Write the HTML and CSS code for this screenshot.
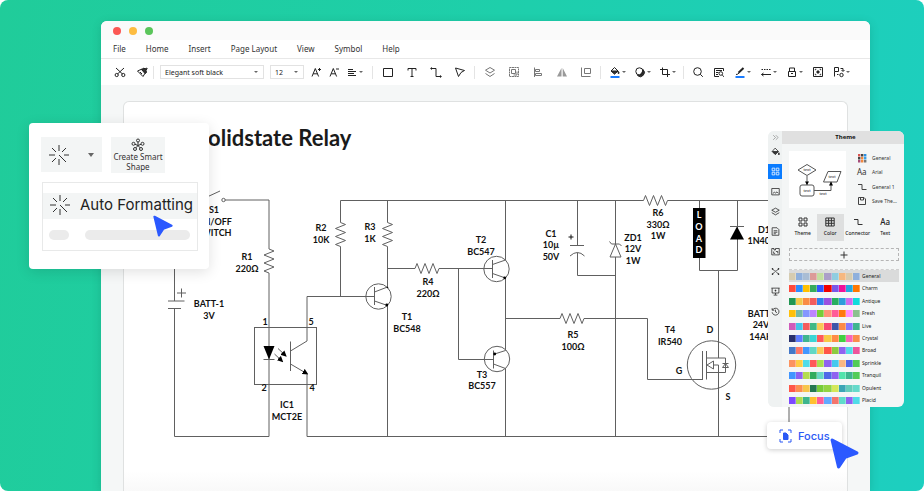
FILE: index.html
```html
<!DOCTYPE html>
<html lang="en">
<head>
  <meta charset="UTF-8" />
  <meta name="viewport" content="width=device-width, initial-scale=1.0"/>
  <title>Solidstate Relay</title>
  <link rel="stylesheet" href="styles.css">
</head>
<body>

<div class="hero">

  <main class="window">
    <div class="titlebar">
      <span class="dot red"></span>
      <span class="dot yellow"></span>
      <span class="dot green"></span>
    </div>

    <nav class="menu">
      <a href="#">File</a>
      <a href="#">Home</a>
      <a href="#">Insert</a>
      <a href="#">Page Layout</a>
      <a href="#">View</a>
      <a href="#">Symbol</a>
      <a href="#">Help</a>
    </nav>

    <div class="toolbar">
      <div class="group clipboard">
        <button class="tool" aria-label="Cut"><svg viewBox="0 0 12 12"><path d="M2 2l6.500 6M10 2L3.500 8"/><circle cx="2.700" cy="9" r="1.600"/><circle cx="9.300" cy="9" r="1.600"/></svg></button>
        <button class="tool" aria-label="Format painter"><svg viewBox="0 0 12 12"><path d="M1.500 5L6 3l3.500 3.500L7 10.500z"/><path class="solid" d="M5.500 3.500L8 2l1 1 1.500-1 .7.700L10 4.200l.5 2.300L9 7.500z"/><path d="M4 6l2 2"/></svg></button>
      </div>

      <div class="group font">
        <div class="picker family">
          <select aria-label="Font"><option>Elegant soft black</option></select>
        </div>
        <div class="picker size">
          <select aria-label="Font size"><option>12</option></select>
        </div>
        <button class="tool" aria-label="Increase font size"><svg viewBox="0 0 12 12"><path d="M2 10.500L5.300 2.500 8.600 10.500M3.200 7.800h4.300M8 3.500h3M9.500 2v3"/></svg></button>
        <button class="tool" aria-label="Decrease font size"><svg viewBox="0 0 12 12"><path d="M2 10.500L5.300 2.500 8.600 10.500M3.200 7.800h4.300M8 3h3"/></svg></button>
        <button class="tool drop" aria-label="Align text"><svg viewBox="0 0 12 12"><path d="M2 3.500h5M2 5.500h8M2 7.500h6M2 9.500h8"/></svg></button>
      </div>

      <div class="group draw">
        <button class="tool" aria-label="Rectangle"><svg viewBox="0 0 12 12"><path d="M1.500 2.500h9v8h-9z"/></svg></button>
        <button class="tool" aria-label="Text"><svg viewBox="0 0 12 12"><path d="M2 4.500v-2h8v2M6 2.500v8M4.500 10.500h3"/></svg></button>
        <button class="tool" aria-label="Connector"><svg viewBox="0 0 12 12"><path d="M2 2.500h4v8h4"/><circle class="solid" cx="1.500" cy="2.500" r=".7"/><circle class="solid" cx="10.500" cy="10.500" r=".7"/></svg></button>
        <button class="tool" aria-label="Select"><svg viewBox="0 0 12 12"><path d="M1.500 2l9 2.500L7 6.500 4.500 10.500z"/></svg></button>
      </div>

      <div class="group arrange">
        <button class="tool" aria-label="Layers"><svg viewBox="0 0 12 12"><path d="M6 1.500L10.500 4.200 6 7 1.500 4.200zM1.500 7.500L6 10.500l4.500-3"/></svg></button>
        <button class="tool" aria-label="Group"><svg viewBox="0 0 12 12"><path d="M1.500 1.500h9v9h-9z" stroke-dasharray="2 .5"/><path d="M3.500 3.500h4v4h-4zM5.500 9h3.500V5.500"/></svg></button>
        <button class="tool" aria-label="Align"><svg viewBox="0 0 12 12"><path d="M2.500 1.500v9.500M3.500 3.500h4v2h-4zM3.500 7.500h6v2h-6z"/></svg></button>
        <button class="tool" aria-label="Flip"><svg viewBox="0 0 12 12"><path class="solid" d="M5.500 2v8.500H1zM6.700 2v8.500h4.300z"/></svg></button>
        <button class="tool" aria-label="Same size"><svg viewBox="0 0 12 12"><path d="M4.500 2.500h6v5h-6zM1.500 1.500v9h9"/></svg></button>
      </div>

      <div class="group style">
        <button class="tool drop" aria-label="Fill"><svg viewBox="0 0 12 12"><path d="M5.500 1.500L9 5 5.500 8 2 5z"/><path class="solid" d="M2.500 5h6.300L5.500 7.800zM9.500 5.500q1.200 2 0 2.300-1-.3 0-2.300z"/><path class="blue" d="M1.500 11h9"/></svg></button>
        <button class="tool drop" aria-label="Shadow"><svg viewBox="0 0 12 12"><path class="solid" d="M9 3.500a4 4 0 0 1-5.500 6q4.500-.5 5.500-6z"/><circle cx="5.400" cy="5.400" r="3.600"/></svg></button>
        <button class="tool drop" aria-label="Crop"><svg viewBox="0 0 12 12"><path d="M3.500 1.500v7h7.500M1 3.500h7.500v7.500"/></svg></button>
      </div>

      <div class="group more">
        <button class="tool" aria-label="Search"><svg viewBox="0 0 12 12"><circle cx="5.500" cy="5.500" r="3.800"/><path d="M8.300 8.300l2.500 2.500"/></svg></button>
        <button class="tool" aria-label="Find"><svg viewBox="0 0 12 12"><path d="M10.500 5V2.500h-9v8H6M3 4.500h6M3 6.500h2.500M3 8.500h2"/><circle cx="7.800" cy="7.500" r="1.800"/><path d="M9.200 9l1.800 1.800"/></svg></button>
        <button class="tool drop" aria-label="Line colour"><svg viewBox="0 0 12 12"><path class="thick" d="M4.500 6.800L9.500 2"/><path d="M2 8.500q2 0 3-1.500"/><path class="blue" d="M1.500 11h9"/></svg></button>
        <button class="tool drop" aria-label="Line style"><svg viewBox="0 0 12 12"><path d="M1.500 3.500h9.500" stroke-dasharray="1.500 1"/><path d="M1.500 8.500h9.500M3.500 7L1.500 8.500l2 1.500"/></svg></button>
        <button class="tool drop" aria-label="Lock"><svg viewBox="0 0 12 12"><path d="M2.500 5.500h7v5h-7zM3.500 5.500v-3.500h5v3.500M5 7.500h2"/></svg></button>
        <button class="tool" aria-label="Fit page"><svg viewBox="0 0 12 12"><path d="M1.500 1.500h9v9h-9z"/><path class="solid" d="M5 5h2v2H5z"/><path d="M3.300 4.200v-1h1M7.700 3.200h1v1M8.700 7.800v1h-1M4.300 8.800h-1v-1"/></svg></button>
        <button class="tool drop" aria-label="Replace shape"><svg viewBox="0 0 12 12"><path d="M1.500 1.500h4v4h-4zM1.500 5.500v5M4 8.500h1.500M7.500 2.500h2.500V5M8.500 4l1.500 1.500L11.500 4"/><circle cx="8.500" cy="9" r="1.700"/></svg></button>
      </div>
    </div>

    <div class="workspace">
      <section class="sheet">
        <h1>Solidstate Relay</h1>

        <svg class="circuit" viewBox="124 160 723 331">
          <defs>
            <path id="res-v" d="M0 0l5 2-10 4 10 4-10 4 10 4-10 4 5 2"/>
            <path id="res-h" d="M0 0l2-5 4 10 4-10 4 10 4-10 4 10 2-5"/>
            <marker id="tip" viewBox="0 0 6 6" refX="5" refY="3" markerWidth="6" markerHeight="6" orient="auto" markerUnits="userSpaceOnUse">
              <path d="M0 0l6 3-6 3z" class="ink"/>
            </marker>
          </defs>

          <!-- supply loop -->
          <path d="M174.500 200V301M168 301h16.500M168 308.500h13M174.500 308.500V436.500H269M177 293h9M181.500 288.500v9"/>
          <path d="M207 197l13-6M225 200h44v49M269 273V436.500"/>
          <circle cx="223.500" cy="200" r="1.700"/>
          <use href="#res-v" x="269" y="249"/>

          <!-- optocoupler -->
          <rect x="254.500" y="327.500" width="62" height="57"/>
          <path class="ink" d="M263.500 346h11L269 359.500z"/>
          <path d="M263.500 359.500h11"/>
          <path marker-end="url(#tip)" d="M278 348.500l8 7.500"/>
          <path marker-end="url(#tip)" d="M274.500 354l8 7.500"/>
          <path d="M290.500 341.500v29.500M290.500 351l16.500-10V296.500h67.500"/>
          <path marker-end="url(#tip)" d="M290.500 364l17 10"/>
          <path d="M307 374v62.500H789V200"/>

          <!-- top rail -->
          <path d="M340.500 222.500V200.500H643.500M667.500 200.500H789M340.500 246.500v50M387.500 200.500v22M387.500 246.500V287M387.500 305V436.500"/>
          <use href="#res-v" x="340.500" y="222.500"/>
          <use href="#res-v" x="387.500" y="222.500"/>
          <use href="#res-h" x="643.500" y="200.500"/>

          <!-- T1 -->
          <circle cx="378.500" cy="296.500" r="12.700"/>
          <path d="M374.500 287v18M374.500 292l13-5M374.500 301l13 4.500"/>
          <circle class="ink" cx="387.500" cy="287.500" r=".8"/>
          <circle class="ink" cx="386.800" cy="305" r="1.400"/>

          <!-- R4, T2 and T3 -->
          <path d="M387.500 268.500H415M439 268.500h54M458.500 268.500v91H493"/>
          <use href="#res-h" x="415" y="268.500"/>
          <circle cx="496.500" cy="269" r="12.700"/>
          <path d="M492.500 260v18M492.500 264.500l13-4.500V200.500M492.500 273.500l13 4.500v72.500l-12.500 4"/>
          <circle class="ink" cx="504.700" cy="277.800" r="1.400"/>
          <circle cx="497" cy="359" r="12.700"/>
          <path d="M493.500 350.500v18M493.500 364l12 4.500v68"/>
          <circle class="ink" cx="494.700" cy="354" r="1.400"/>

          <!-- R5 to the gate -->
          <path d="M505.500 318.500H560M584 318.500h63.500v61H703"/>
          <use href="#res-h" x="560" y="318.500"/>

          <!-- C1 and ZD1 -->
          <path d="M577.500 200.500v45M570 245.500h14M570 256q7.500-7 14.500 0M577.500 252.500V275.500h38"/>
          <path class="plus" d="M568.500 237h5M571 234.500v5"/>
          <path d="M615.500 200.500V244M609.500 241.500l2 2.500h8l2 2M615.500 244l-5.500 13h11zM615.500 257V436.500"/>

          <!-- load and D1 -->
          <path d="M699.500 200.500V270.500h38V200.500M718.500 270.500V358"/>
          <rect class="ink" x="693" y="208" width="12.500" height="50"/>
          <path class="ink" d="M730 239.500h14l-7-13z"/>
          <path d="M730 226.500h14"/>

          <!-- T4 -->
          <circle cx="711.500" cy="365" r="24.200"/>
          <path d="M702.500 351v28.500M706.500 351v28.500M706.500 358h19v14.500h-19M707 365l6.500-4v8zM713.500 365h5v71.500"/>
          <path d="M722.500 363.500h6M725.500 363.500l-3 4h6z"/>

          <g class="labels">
            <text x="214" y="213">S1</text><text x="214" y="225">ON/OFF</text><text x="214" y="236">SWITCH</text>
            <text x="247" y="260">R1</text><text x="247" y="272">220Ω</text>
            <text x="209" y="307">BATT-1</text><text x="209" y="319">3V</text>
            <text x="321" y="231">R2</text><text x="321" y="243">10K</text>
            <text x="370" y="230">R3</text><text x="370" y="242">1K</text>
            <text x="265" y="325">1</text><text x="311" y="325">5</text><text x="264" y="391">2</text><text x="312" y="391">4</text>
            <text x="287" y="408">IC1</text><text x="287" y="420">MCT2E</text>
            <text x="407" y="320">T1</text><text x="407" y="332">BC548</text>
            <text x="428" y="285">R4</text><text x="428" y="297">220Ω</text>
            <text x="481" y="243">T2</text><text x="481" y="255">BC547</text>
            <text x="482" y="378">T3</text><text x="482" y="389">BC557</text>
            <text x="551" y="237">C1</text><text x="551" y="248">10µ</text><text x="551" y="260">50V</text>
            <text x="573" y="338">R5</text><text x="573" y="350">100Ω</text>
            <text x="633" y="241">ZD1</text><text x="633" y="252">12V</text><text x="633" y="264">1W</text>
            <text x="658" y="216">R6</text><text x="658" y="228">330Ω</text><text x="658" y="239">1W</text>
            <text x="764" y="233">D1</text><text x="764" y="244">1N4007</text>
            <text x="763" y="317">BATT-2</text><text x="761" y="328">24V</text><text x="761" y="340">14AH</text>
            <text x="670" y="333">T4</text><text x="670" y="345">IR540</text>
            <text x="710" y="333">D</text><text x="679" y="374">G</text><text x="728" y="400">S</text>
          </g>
          <g class="labels load">
            <text x="699" y="218">L</text><text x="699" y="230">O</text><text x="699" y="242">A</text><text x="699" y="253">D</text>
          </g>
        </svg>
      </section>
    </div>
  </main>

  <!-- auto formatting popup -->
  <section class="popup">
    <div class="popup-tools">
      <button class="burst-btn" aria-label="Auto format">
        <svg class="burst" viewBox="0 0 22 22"><path d="M11 1v6M11 15v6M1 11h6M16 11h5M4 4l4 4M11 11l7 7M18 4l-4 4M8 14l-4 4"/></svg>
        <span class="arrow"></span>
      </button>
      <button class="smart-btn">
        <svg viewBox="0 0 14 14"><circle cx="7" cy="2.500" r="1.500"/><circle cx="2.500" cy="5.800" r="1.500"/><circle cx="11.500" cy="5.800" r="1.500"/><circle cx="4" cy="11" r="1.500"/><circle cx="10" cy="11" r="1.500"/><path d="M7 4v3.500M4 6.300L7 7.500l3-1.200M5 9.800l2-2.300 2 2.300"/></svg>
        Create Smart Shape
      </button>
    </div>
    <div class="popup-list">
      <button class="format-row">
        <svg class="burst" viewBox="0 0 22 22"><path d="M11 1v6M11 15v6M1 11h6M16 11h5M4 4l4 4M11 11l7 7M18 4l-4 4M8 14l-4 4"/></svg>
        Auto Formatting
      </button>
      <div class="ghost-row"><span></span><span></span></div>
    </div>
    <svg class="pointer small" viewBox="0 0 27 29"><path d="M2 2l23 12-11 4-6 9z"/></svg>
  </section>

  <!-- theme panel -->
  <aside class="panel">
    <div class="rail">
      <button class="collapse" aria-label="Collapse"><svg viewBox="0 0 12 12"><path d="M2 2l4 4-4 4M6.500 2l4 4-4 4"/></svg></button>
      <button aria-label="Fill"><svg viewBox="0 0 12 12"><path d="M5.500 1.500L10 6 5.500 10 1.500 6z"/><path class="solid" d="M2 6h7.500l-4 3.800zM10.500 7.500q1.500 2.500 0 3-1.500-.5 0-3z"/></svg></button>
      <button class="active" aria-label="Theme"><svg viewBox="0 0 12 12"><path d="M1.500 1.500h3.500v3.500H1.500zM7 1.500h3.500v3.500H7zM1.500 7h3.500v3.500H1.500zM7 7h3.500v3.500H7z"/></svg></button>
      <button aria-label="Picture"><svg viewBox="0 0 12 12"><path d="M1 2h10v8.500H1zM2.500 8.500l2-1.500 1.500 1 2-1.500 2 2"/></svg></button>
      <button aria-label="Layers"><svg viewBox="0 0 12 12"><path d="M6 1.500l5 2.800L6 7 1 4.300zM1 7.500l5 3 5-3"/></svg></button>
      <button aria-label="Page"><svg viewBox="0 0 12 12"><path d="M1.500 1h6.500l2.500 2.500V11h-9zM3.500 5h5M3.500 7h5M3.500 9h3"/></svg></button>
      <button aria-label="Symbols"><svg viewBox="0 0 12 12"><path d="M1 2h3v2h2V2h5v8.500H1zM3.500 6v2.500h2M6.500 6H9v2.500"/></svg></button>
      <button aria-label="Layout"><svg viewBox="0 0 12 12"><path d="M2 2.500l3 3h2l3-3M2 9.500l3-3M10 9.500l-3-3"/><path class="solid" d="M1.500 2h1v1h-1zM9.500 2h1v1h-1zM1.500 9h1v1h-1zM9.500 9h1v1h-1z"/></svg></button>
      <button aria-label="Present"><svg viewBox="0 0 12 12"><path d="M.5 1.500h11M1.500 1.500V8h9V1.500M6 8v2.500M3.500 10.800h5M6 3.500v2.500M4.800 4.800h2.400"/></svg></button>
      <button aria-label="History"><svg viewBox="0 0 12 12"><path d="M2 4a4.600 4.600 0 1 1-.5 3M1.500 1.500V4.300h3M6 3.500v3l2 1"/></svg></button>
    </div>

    <div class="theme">
      <h2>Theme</h2>

      <div class="overview">
        <svg class="preview" viewBox="0 0 57 57">
          <path d="M9 19l9-5.500 9 5.500-9 5.500zM39 20.500h13l-4 10.500H34.500zM13 34h10a2 2 0 0 1 2 2v7a2 2 0 0 1-2 2H13a2 2 0 0 1-2-2v-7a2 2 0 0 1 2-2zM18 25v9M25 39.500h17V31"/>
          <path class="ink" d="M16 30.500h4l-2 3.500zM40 34.500h4l-2-4z"/>
          <text x="18" y="20">text</text><text x="43" y="27">text</text><text x="18" y="41">text</text><text x="34" y="44">text</text>
        </svg>
        <ul class="current">
          <li><svg viewBox="0 0 10 10"><path fill="#d9534f" d="M1 1h2.400v2.400H1z"/><path fill="#444" d="M4 1h2.400v2.400H4z"/><path fill="#2d8fe0" d="M7 1h2.400v2.400H7z"/><path fill="#444" d="M1 4h2.400v2.400H1z"/><path fill="#f0883e" d="M4 4h2.400v2.400H4z"/><path fill="#3aa0e8" d="M7 4h2.400v2.400H7z"/><path fill="#a64d79" d="M1 7h2.400v2.400H1z"/><path fill="#f0883e" d="M4 7h2.400v2.400H4z"/><path fill="#777" d="M7 7h2.400v2.400H7z"/></svg>General</li>
          <li><span class="aa">Aa</span>Arial</li>
          <li><svg class="line" viewBox="0 0 10 10"><path d="M1 2.500h4v5h4.500"/></svg>General 1</li>
          <li><svg class="line" viewBox="0 0 10 10"><path d="M1.500 1.500h5.500L8.500 3v5.500h-7zM3.500 1.500v2.500h3V1.500"/></svg>Save The...</li>
        </ul>
      </div>

      <div class="tabs">
        <button><svg viewBox="0 0 10 10"><path d="M1 1h3v3H1zM6 1h3v3H6zM1 6h3v3H1zM6 6h3v3H6z"/></svg>Theme</button>
        <button class="on"><svg viewBox="0 0 10 10"><path d="M.8 1h8.400v8H.8zM.8 3.700h8.400M.8 6.300h8.400M3.600 1v8M6.400 1v8"/></svg>Color</button>
        <button><svg viewBox="0 0 10 10"><path d="M1 2.500h4v5h4.500"/></svg>Connector</button>
        <button><span class="aa">Aa</span>Text</button>
      </div>

      <button class="add" aria-label="Add color theme"><svg viewBox="0 0 8 8"><path d="M4 .5v7M.5 4h7"/></svg></button>

      <div class="schemes" id="schemes"></div>
    </div>
  </aside>

  <button class="focus">
    <svg class="focus-icon" viewBox="0 0 13 14"><path d="M1 4V1h3M9 1h3v3M12 10v3H9M4 13H1v-3"/><path class="doc" d="M4.500 4h2.500L9 6v4.500H4.500z"/></svg>
    Focus
    <svg class="pointer" viewBox="0 0 27 29"><path d="M2 2l23 12-11 4-6 9z"/></svg>
  </button>

</div>

<script>
  const schemes = {
    General: ["#d6ccb0", "#8fb0dc", "#a9bdd4", "#dc9a98", "#c3dea0", "#ab9fc8", "#8fcde0", "#f6b880", "#d6ccb0", "#8fb0dc"],
    Charm: ["#ff4a3c", "#2d8cff", "#ffc000", "#34ab5c", "#2f55ff", "#f00000", "#7857e8", "#ee1199", "#22a7e0", "#ff7800"],
    Antique: ["#219653", "#f2c94c", "#fa8c45", "#f25d5d", "#2f80ed", "#9b51e0", "#27ae60", "#2d9cdb", "#cc6cf0", "#10dcdc"],
    Fresh: ["#ffc00a", "#74b9a8", "#8597ff", "#bd84ff", "#77cc38", "#ff9478", "#ff5c98", "#ff7811", "#ff8cff", "#8cc08f"],
    Live: ["#cf5bba", "#45c5e8", "#f45c5c", "#41b886", "#fac858", "#f74b72", "#3f55a8", "#fc8a48", "#8577ff", "#3eb58f"],
    Crystal: ["#29306c", "#5c7cff", "#3eb58f", "#3bd5d5", "#ff5959", "#f7ca45", "#ff8b45", "#40d040", "#f865b8", "#fa8c4c"],
    Broad: ["#4478c8", "#ff7868", "#4296ff", "#62d8c5", "#fac858", "#ff5648", "#8bcb3e", "#8f62f0", "#52dbe8", "#ee549c"],
    Sprinkle: ["#fc9360", "#ffcd45", "#50dce8", "#ff5959", "#a8de50", "#8f62f0", "#45c9ed", "#fab884", "#5069e8", "#52cc58"],
    Tranquil: ["#4296ff", "#8f62f0", "#b4dc50", "#32ac5f", "#68d8c6", "#5069e8", "#8f62f0", "#52e3ac", "#3eb58f", "#52cc58"],
    Opulent: ["#ff5648", "#fc9050", "#f7c54c", "#247850", "#77cc38", "#93d442", "#d5e858", "#3ba5b5", "#63cdbb", "#65dacb"],
    Placid: ["#7c49ff", "#addd50", "#3eb58f", "#ffc030", "#ff5c98", "#62aaff", "#f4756c", "#60dccb", "#8f62f0", "#50dce8"]
  };

  const list = document.getElementById("schemes");

  for (const name in schemes) {
    const row = document.createElement("button");
    row.className = name === "General" ? "scheme selected" : "scheme";
    const swatches = schemes[name].map(c => `<i style="background:${c}"></i>`).join("");
    row.innerHTML = `<span class="swatches">${swatches}</span>${name}`;
    list.appendChild(row);
  }
</script>

</body>
</html>
```
FILE: styles.css
```css
* {
  box-sizing: border-box;
}

body {
  margin: 0;
  background: #fff;
  font-family: "Noto Sans", sans-serif;
  color: #333;
}

h1, h2, ul {
  margin: 0;
  padding: 0;
}

button {
  border: 0;
  padding: 0;
  background: none;
  font: inherit;
  color: inherit;
}

svg {
  display: block;
  fill: none;
  stroke: #333;
}

.solid {
  fill: #333;
}

.hero {
  position: relative;
  display: flex;
  height: 100vh;
  min-height: 491px;
  padding: 21px 54px 0 101px;
  overflow: hidden;
  border-radius: 8px;
  background: linear-gradient(100deg, #20cc9a, #1ecfab 50%, #1dcfc0);
}

/* editor window */

.window {
  flex: 1;
  display: flex;
  flex-direction: column;
  min-width: 0;
  border-radius: 6px 6px 0 0;
  background: #fff;
  box-shadow: 0 2px 10px rgba(0, 80, 60, 0.2);
}

.titlebar {
  display: flex;
  align-items: center;
  gap: 8px;
  height: 19px;
  padding-left: 12px;
  border-radius: 6px 6px 0 0;
  background: #fafafa;
}

.dot {
  width: 8px;
  height: 8px;
  border-radius: 50%;
}

.red { background: #fc5753; }
.yellow { background: #fdbc40; }
.green { background: #5ac55a; }

.menu {
  display: flex;
  align-items: center;
  justify-content: flex-start;
  gap: 20px;
  height: 19px;
  padding: 0 0 2px 12px;
  border-bottom: 1px solid #e8e8e8;
  font-size: 8px;
}

.menu a {
  color: #333;
  text-decoration: none;
}

.toolbar {
  display: flex;
  align-items: center;
  height: 26px;
  padding-left: 13px;
}

.group {
  display: flex;
  align-items: center;
  height: 13px;
  padding: 0 9px;
  border-left: 1px solid #e4e4e4;
}

.clipboard {
  gap: 10px;
  padding: 0 5px 0 0;
  border: 0;
}

.font { gap: 6px; padding-left: 6px; }
.draw, .arrange { gap: 12px; padding-right: 8px; }
.style { gap: 8px; padding: 0 7px 0 8px; }
.more { gap: 9px; padding-left: 8px; }

.tool {
  display: flex;
  align-items: center;
}

.tool svg {
  width: 12px;
  height: 12px;
  stroke: #222;
}

.tool.drop svg {
  margin-right: 1px;
}

.arrange .tool svg { stroke: #777; }
.arrange .solid { fill: #999; stroke: none; }

.thick { stroke-width: 2; }
.blue { stroke: #1a7cff; stroke-width: 2; }

.drop::after,
.picker::after,
.arrow {
  content: "";
  border: 2px solid transparent;
  border-top-color: #666;
  border-bottom: 0;
}

.picker {
  display: flex;
  align-items: center;
  height: 14px;
  padding-right: 5px;
  border: 1px solid #e2e2e2;
}

.family { width: 104px; }
.size { width: 34px; }

.picker select {
  flex: 1;
  min-width: 0;
  padding: 0 0 0 4px;
  border: 0;
  background: none;
  appearance: none;
  font: 7px "Noto Sans", sans-serif;
  color: #222;
}

.workspace {
  flex: 1;
  display: flex;
  padding: 16px 22px 0;
  background: #f5f7f7;
}

.sheet {
  flex: 1;
  min-width: 0;
  border: 1px solid #dfe1e1;
  border-bottom: 0;
  border-radius: 6px 6px 0 0;
  background: linear-gradient(to top, #f9f9f9, #fff 20px);
}

.sheet h1 {
  height: 58px;
  padding: 22px 0 0 72px;
  font: bold 22px/28px Lato, sans-serif;
  color: #1a1a1a;
}

.circuit {
  width: 100%;
  stroke: #606060;
}

.ink {
  fill: #000;
  stroke: none;
}

.plus { stroke: #111; }

.labels {
  fill: #111;
  stroke: none;
  font: bold 9px Lato, sans-serif;
  text-anchor: middle;
}

.load { fill: #fff; }

/* auto formatting popup */

.popup {
  position: absolute;
  left: 29px;
  top: 123px;
  width: 180px;
  padding: 14px 11px 18px 12px;
  border-radius: 4px;
  background: #fff;
  box-shadow: 0 3px 14px rgba(0, 0, 0, 0.12);
}

.popup-tools {
  display: flex;
  gap: 9px;
}

.burst-btn {
  display: flex;
  align-items: center;
  justify-content: space-between;
  width: 61px;
  height: 35px;
  padding: 0 8px 0 7px;
  background: #f3f5f5;
}

.arrow { border-width: 4px 3px 0; }

.burst {
  width: 22px;
  height: 22px;
}

.smart-btn {
  display: flex;
  flex-direction: column;
  align-items: center;
  width: 54px;
  height: 36px;
  padding-top: 1px;
  background: #f3f5f5;
  font-size: 8px;
  line-height: 10px;
}

.smart-btn svg {
  width: 14px;
  height: 14px;
}

.popup-list {
  margin: 9px 0 0 1px;
  padding: 10px 0;
  border: 1px solid #e8e9e9;
}

.format-row {
  display: flex;
  align-items: center;
  gap: 9px;
  width: 100%;
  height: 26px;
  padding: 0 0 3px 6px;
  background: #f3f5f5;
  font: 15px Inter, sans-serif;
  color: #222;
  white-space: nowrap;
}

.ghost-row {
  display: flex;
  gap: 16px;
  padding: 11px 7px 0 6px;
}

.ghost-row span {
  flex: 1;
  height: 10px;
  border-radius: 5px;
  background: #ebebeb;
}

.ghost-row span:first-child {
  flex: 0 0 20px;
}

.pointer {
  position: absolute;
  left: 63px;
  top: 16px;
  width: 29px;
  height: 31px;
  fill: #2b59ff;
  stroke: #2b59ff;
  stroke-width: 3;
  stroke-linejoin: round;
}

.pointer.small {
  left: 124px;
  top: 91px;
  width: 20px;
  height: 24px;
}

/* theme panel */

.panel {
  position: absolute;
  right: 20px;
  top: 131px;
  display: flex;
  width: 136px;
  height: 276px;
  overflow: hidden;
  border-radius: 6px;
  background: #f4f6f6;
  font-size: 5px;
}

.rail {
  display: flex;
  flex-direction: column;
  gap: 5px;
  width: 14px;
  background: #eff2f2;
}

.rail button {
  display: flex;
  align-items: center;
  justify-content: center;
  height: 15px;
}

.rail .collapse {
  height: 12px;
  margin-bottom: -4px;
}

.rail svg {
  width: 9px;
  height: 9px;
  stroke: #222;
}

.rail .collapse svg {
  width: 7px;
  height: 7px;
  stroke: #777;
}

.rail .active { background: #0a7cff; }
.rail .active svg { stroke: #fff; }

.theme {
  flex: 1;
  display: flex;
  flex-direction: column;
}

.theme h2 {
  padding-left: 5px;
  background: #e0e0e0;
  font-size: 6px;
  line-height: 13px;
  text-align: center;
  color: #111;
}

.overview {
  display: flex;
  gap: 11px;
  padding: 7px 0 6px 7px;
}

.preview {
  width: 57px;
  height: 57px;
  background: #fff;
  stroke: #555;
  font-size: 4px;
}

.preview text {
  fill: #111;
  stroke: none;
  text-anchor: middle;
}

.current {
  display: flex;
  flex-direction: column;
  justify-content: space-between;
  height: 57px;
  list-style: none;
}

.current li {
  display: flex;
  align-items: center;
  gap: 5px;
  height: 14px;
  white-space: nowrap;
}

.current svg {
  width: 10px;
  height: 10px;
  stroke: none;
}

.current .line { stroke: #444; }

.aa {
  width: 10px;
  font-size: 8px;
  line-height: 10px;
}

.tabs {
  display: grid;
  grid-template-columns: repeat(4, 1fr);
  padding: 0 5px 0 7px;
}

.tabs button {
  display: flex;
  flex-direction: column;
  align-items: center;
  gap: 3px;
  height: 27px;
  padding-top: 3px;
  font-weight: 500;
  color: #222;
}

.tabs svg {
  width: 10px;
  height: 10px;
}

.tabs .on { background: #dedfdf; }

.add {
  display: flex;
  align-items: center;
  justify-content: center;
  height: 13px;
  margin: 7px 5px 8px 7px;
  border: 1px dashed #b5b5b5;
}

.add svg {
  width: 8px;
  height: 8px;
}

.schemes {
  flex: 1;
  display: grid;
  grid-auto-rows: 1fr;
  margin: 0 5px 0 7px;
  border-top: 1px dashed #d0d0d0;
}

.scheme {
  display: flex;
  align-items: center;
  gap: 2px;
  line-height: 7px;
  color: #222;
}

.selected { background: #dadbdb; }

.swatches {
  display: flex;
  width: 71px;
  height: 7px;
}

.swatches i {
  flex: 1;
  border-right: 1px solid rgba(255, 255, 255, 0.3);
}

/* focus button */

.focus {
  position: absolute;
  right: 82px;
  top: 422px;
  display: flex;
  align-items: center;
  gap: 6px;
  width: 75px;
  height: 27px;
  padding-left: 12px;
  border-radius: 4px;
  background: #fff;
  box-shadow: 0 1px 5px rgba(0, 0, 0, 0.2);
  font: 500 11px Inter, sans-serif;
  color: #2b59f5;
}

.focus-icon {
  width: 13px;
  height: 14px;
  stroke: #2b59f5;
}

.doc { fill: #2b59f5; }
```
